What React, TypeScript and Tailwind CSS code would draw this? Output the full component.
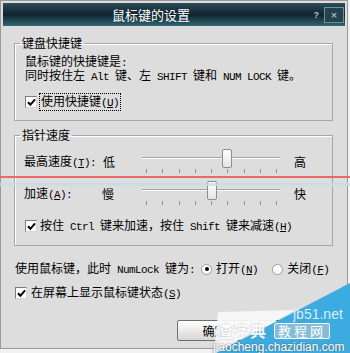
import React from "react";

// half-width latin in the SimSun-like dialog font
const L = ({ children }: { children: React.ReactNode }) => (
  <span className="font-['Liberation_Mono',monospace] text-[11px] tracking-[-0.6px]">{children}</span>
);

const Key = ({ k }: { k: string }) => (
  <L>
    (<span className="underline underline-offset-1">{k}</span>)
  </L>
);

function CheckBox() {
  return (
    <span className="flex h-[12px] w-[12px] shrink-0 items-center justify-center border border-[#7c7c7c] border-b-[#d4d4d4] border-r-[#d4d4d4] bg-white">
      <svg width="9" height="9" viewBox="0 0 9 9">
        <path d="M1 4.2 L3.4 6.8 L8 1.4" stroke="#000" strokeWidth="2" fill="none" />
      </svg>
    </span>
  );
}

function Radio({ on }: { on?: boolean }) {
  return (
    <span className="flex h-[11px] w-[11px] shrink-0 items-center justify-center rounded-full border border-[#9a9a9a] bg-white">
      {on && <span className="h-[4px] w-[4px] rounded-full bg-black" />}
    </span>
  );
}

function Slider({ pos }: { pos: number }) {
  return (
    <div className="relative h-[28px] w-[138px]">
      <div className="mt-[9px] h-[2px] border-t border-b border-t-[#a4a4a4] border-b-white" />
      <div className="mt-[10px] flex justify-between pl-[4px] pr-[3px]">
        {Array.from({ length: 9 }).map((_, i) => (
          <span key={i} className="h-[4px] w-px bg-[#8c8c8c]" />
        ))}
      </div>
      <div
        className="absolute top-[1px] h-[19px] w-[10px] rounded-[2px] border border-[#8e8e8e] bg-gradient-to-b from-white to-[#e4e4e4]"
        style={{ left: pos }}
      />
    </div>
  );
}

export default function App() {
  return (
    <div className="relative h-[353px] w-[350px] overflow-hidden bg-[#f2f2f2] font-['Noto_Sans_CJK_SC',sans-serif] text-[12px] leading-[12px] text-black">
      <div className="flex h-[349px] w-[348px] flex-col border border-[#9a9a9a] bg-[#dddddd] p-[2px]">
        {/* title bar */}
        <div className="flex h-[23px] items-center bg-gradient-to-b from-[#2d4e5a] via-[#0f252e] to-[#356776]">
          <span className="pl-[109px] text-[13px] leading-[13px] text-white">鼠标键的设置</span>
          <span className="ml-auto mr-[5px] font-['Liberation_Sans',sans-serif] text-[9px] font-bold text-[#b8c4c8]">?</span>
          <span className="mr-[1px] flex h-[16px] w-[20px] items-center justify-center border border-[#6f8f9a] bg-[#24434e] font-['Liberation_Sans',sans-serif] text-[11px] text-[#c8d4d8]">
            ×
          </span>
        </div>

        <div className="flex flex-col pl-[11px]">
          <fieldset className="mt-[10px] w-[319px] border border-[#a8a8a8] shadow-[inset_1px_1px_0_#fff]">
            <legend className="ml-[5px] px-[2px] leading-[14px]">键盘快捷键</legend>
            <div className="pb-[11px] pl-[10px] pt-[5px]">
              <p>
                鼠标键的快捷键是<L>:</L>
                <br />
                同时按住左<L> Alt </L>键、左<L> SHIFT </L>键和<L> NUM LOCK </L>键。
              </p>
              <div className="mt-[12px] flex h-[14px] items-center">
                <CheckBox />
                <span className="ml-[2px] border border-dotted border-black px-[1px] py-px">
                  使用快捷键<Key k="U" />
                </span>
              </div>
            </div>
          </fieldset>

          <fieldset className="mt-[7px] w-[319px] border border-[#a8a8a8] shadow-[inset_1px_1px_0_#fff]">
            <legend className="ml-[5px] px-[2px] leading-[14px]">指针速度</legend>
            <div className="pb-[12px] pl-[9px] pt-[6px]">
              <div className="flex h-[28px] items-center">
                <span className="w-[79px]">
                  最高速度<Key k="T" />
                  <L>:</L>
                </span>
                <span className="w-[39px]">低</span>
                <Slider pos={80} />
                <span className="ml-[14px]">高</span>
              </div>
              <div className="mt-[4px] flex h-[28px] items-center">
                <span className="w-[78px]">
                  加速<Key k="A" />
                  <L>:</L>
                </span>
                <span className="w-[40px]">慢</span>
                <Slider pos={65} />
                <span className="ml-[14px]">快</span>
              </div>
              <div className="mt-[11px] flex h-[14px] items-center pl-[1px]">
                <CheckBox />
                <span className="ml-[3px]">
                  按住<L> Ctrl </L>键来加速，按住<L> Shift </L>键来减速<Key k="H" />
                </span>
              </div>
            </div>
          </fieldset>

          <div className="mt-[16px] flex h-[14px] items-center pl-[1px]">
            <span>
              使用鼠标键，此时<L> NumLock </L>键为<L>:</L>
            </span>
            <span className="ml-[6px]">
              <Radio on />
            </span>
            <span className="ml-[4px]">
              打开<Key k="N" />
            </span>
            <span className="ml-[14px]">
              <Radio />
            </span>
            <span className="ml-[4px]">
              关闭<Key k="F" />
            </span>
          </div>

          <div className="mt-[10px] flex h-[14px] items-center pl-[1px]">
            <CheckBox />
            <span className="ml-[4px]">
              在屏幕上显示鼠标键状态<Key k="S" />
            </span>
          </div>

          <div className="mt-[20px] flex gap-[6px] pl-[163px]">
            <button className="flex h-[21px] w-[75px] items-center justify-center rounded-[2px] border border-[#6e6e6e] bg-gradient-to-b from-white to-[#d6d6d6] text-[12px]">
              确定
            </button>
            <button className="flex h-[21px] w-[75px] items-center justify-center rounded-[2px] border border-[#6e6e6e] bg-gradient-to-b from-white to-[#d6d6d6] text-[12px]">
              取消
            </button>
          </div>
        </div>
      </div>

      {/* scan artefacts across the shot */}
      <div className="absolute left-0 top-[176px] h-[2px] w-full bg-[#e56b6b]" />
      <div className="absolute left-0 top-[183px] h-[3px] w-full bg-[#c9dce8] opacity-80" />

      {/* site watermark */}
      <svg className="absolute left-[200px] top-[275px]" width="150" height="78" viewBox="0 0 150 78">
        <polygon points="150,8 150,78 16,78" fill="#3cace0" />
        <polygon points="18,37 96,35 14,78" fill="#f6f9fb" opacity="0.92" />
      </svg>
      <span className="absolute left-[293px] top-[307px] font-['Liberation_Sans',sans-serif] text-[14px] leading-[14px] text-[#d9eef8]">
        jb51.net
      </span>
      <span className="absolute left-[218px] top-[322px] text-[16px] font-bold leading-[16px] text-white opacity-90 [text-shadow:0_0_1px_#8a8a8a]">
        查字典
      </span>
      <span className="absolute left-[274px] top-[323px] rounded-[2px] border border-white bg-[#b9c6cf]/60 px-[3px] text-[13px] leading-[14px] tracking-[3px] text-white">
        教程网
      </span>
      <span className="absolute left-[213px] top-[341px] font-['Liberation_Sans',sans-serif] text-[12px] leading-[12px] text-white [text-shadow:0_0_2px_#555]">
        jiaocheng.chazidian.com
      </span>
    </div>
  );
}
